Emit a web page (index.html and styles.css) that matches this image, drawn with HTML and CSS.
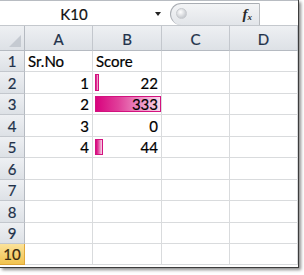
FILE: index.html
```html
<!DOCTYPE html>
<html>
<head>
<meta charset="utf-8">
<link rel="stylesheet" href="styles.css">
</head>
<body>
<div class="frame">
  <div class="toolbar">
    <div class="namebox">
      <span class="name">K10</span>
      <span class="arrow"></span>
    </div>
    <div class="pill">
      <span class="knob"></span>
      <span class="fx">f<sub>x</sub></span>
    </div>
    <div class="input"></div>
  </div>
  <div class="sheet">
    <div class="hd corner"><span class="tri"></span></div>
    <div class="hd col">A</div>
    <div class="hd col">B</div>
    <div class="hd col">C</div>
    <div class="hd col">D</div>

    <div class="hd row">1</div>
    <div class="c">Sr.No</div>
    <div class="c">Score</div>
    <div class="c"></div>
    <div class="c"></div>

    <div class="hd row">2</div>
    <div class="c num">1</div>
    <div class="c num"><span class="bar" style="width:4px"></span><span class="v">22</span></div>
    <div class="c"></div>
    <div class="c"></div>

    <div class="hd row">3</div>
    <div class="c num">2</div>
    <div class="c num"><span class="bar" style="width:66px"></span><span class="v">333</span></div>
    <div class="c"></div>
    <div class="c"></div>

    <div class="hd row">4</div>
    <div class="c num">3</div>
    <div class="c num"><span class="v">0</span></div>
    <div class="c"></div>
    <div class="c"></div>

    <div class="hd row">5</div>
    <div class="c num">4</div>
    <div class="c num"><span class="bar" style="width:8px"></span><span class="v">44</span></div>
    <div class="c"></div>
    <div class="c"></div>

    <div class="hd row">6</div>
    <div class="c"></div><div class="c"></div><div class="c"></div><div class="c"></div>
    <div class="hd row">7</div>
    <div class="c"></div><div class="c"></div><div class="c"></div><div class="c"></div>
    <div class="hd row">8</div>
    <div class="c"></div><div class="c"></div><div class="c"></div><div class="c"></div>
    <div class="hd row">9</div>
    <div class="c"></div><div class="c"></div><div class="c"></div><div class="c"></div>
    <div class="hd row sel">10</div>
    <div class="c"></div><div class="c"></div><div class="c"></div><div class="c"></div>
  </div>
</div>
</body>
</html>
```

FILE: styles.css
```css
html, body {
  margin: 0;
  padding: 0;
  background: #ffffff;
}
body {
  width: 304px;
  height: 275px;
  overflow: hidden;
  font-family: Lato, "Liberation Sans", sans-serif;
  color: #000;
}
.frame {
  width: 298px;
  border-right: 1px solid #3c3c3c;
  border-bottom: 1px solid #3c3c3c;
  padding-bottom: 2px;
  box-shadow: 2px 2px 3px rgba(0, 0, 0, 0.45);
  background: #fff;
}
.toolbar {
  height: 24px;
  border-top: 1px solid #b8bcc2;
  display: flex;
  border-bottom: 1px solid #c4c8cd;
}
.namebox {
  width: 166px;
  display: flex;
  align-items: center;
  background: #fff;
}
.name {
  width: 148px;
  text-align: center;
  font-size: 15px;
  color: #111;
  padding-top: 1px;
  -webkit-text-stroke: 0.2px #111;
}
.arrow {
  width: 0;
  height: 0;
  margin-left: 7px;
  margin-top: 1px;
  border-left: 3.5px solid transparent;
  border-right: 3.5px solid transparent;
  border-top: 4px solid #222;
}
.pill {
  margin-left: 4px;
  margin-top: 2px;
  height: 21px;
  border: 1px solid #a9adb3;
  border-bottom: none;
  border-right: 1px solid #b9bcc0;
  border-radius: 12px 0 0 12px;
  background: linear-gradient(#f3f4f6, #e2e5e9);
  display: flex;
  align-items: center;
  justify-content: space-between;
  padding: 0 7px 0 5px;
  box-sizing: content-box;
  width: 76px;
}
.knob {
  width: 9px;
  height: 9px;
  border-radius: 50%;
  background: radial-gradient(circle at 40% 35%, #ffffff, #c9ccd1 70%);
  border: 1px solid #c7cace;
  margin-top: -3px;
}
.fx {
  font-family: "Liberation Serif", serif;
  font-style: italic;
  font-weight: bold;
  font-size: 15px;
  color: #2a2a2a;
  line-height: 1;
}
.fx sub {
  font-size: 9px;
  vertical-align: -1px;
}
.input {
  flex: 1;
  background: #fff;
}
.sheet {
  display: grid;
  grid-template-columns: 25px 68px 69px 68px 68px;
  grid-template-rows: 25px 21px 22px 21px 22px 21px 22px 21px 22px 21px 21px;
}
.hd {
  background: linear-gradient(#eef0f3, #dde1e6);
  border-right: 1px solid #c3c7cd;
  border-bottom: 1px solid #b5bac1;
  box-sizing: border-box;
  display: flex;
  align-items: center;
  justify-content: center;
  font-size: 15px;
  color: #22324a;
  -webkit-text-stroke: 0.2px #22324a;
}
.col {
  padding-top: 1px;
}
.row {
  border-bottom-color: #c3c7cd;
  border-right-color: #b5bac1;
}
.corner {
  position: relative;
  border-right-color: #b5bac1;
}
.tri {
  position: absolute;
  right: 3px;
  bottom: 3px;
  width: 0;
  height: 0;
  border-left: 12px solid transparent;
  border-bottom: 12px solid #c5cad1;
}
.sel {
  background: linear-gradient(#fbe29a, #f2c34f);
  border-right-color: #e0a73a;
  border-bottom-color: #e0a73a;
  color: #3a2a10;
  -webkit-text-stroke: 0.2px #3a2a10;
}
.c {
  border-right: 1px solid #d9dbdd;
  border-bottom: 1px solid #d9dbdd;
  box-sizing: border-box;
  display: flex;
  align-items: flex-end;
  padding: 0 3px 1px 3px;
  font-size: 15px;
  line-height: 18px;
  position: relative;
  color: #000;
  -webkit-text-stroke: 0.2px #000;
}
.num {
  justify-content: flex-end;
}
.v {
  position: relative;
}
.bar {
  position: absolute;
  left: 2px;
  top: 2px;
  bottom: 2px;
  box-sizing: border-box;
  border: 1px solid #d3127f;
  background: linear-gradient(to right, #d9037e, #e0409a 35%, #f0a8cf 80%, #f8d8ea);
}
```
